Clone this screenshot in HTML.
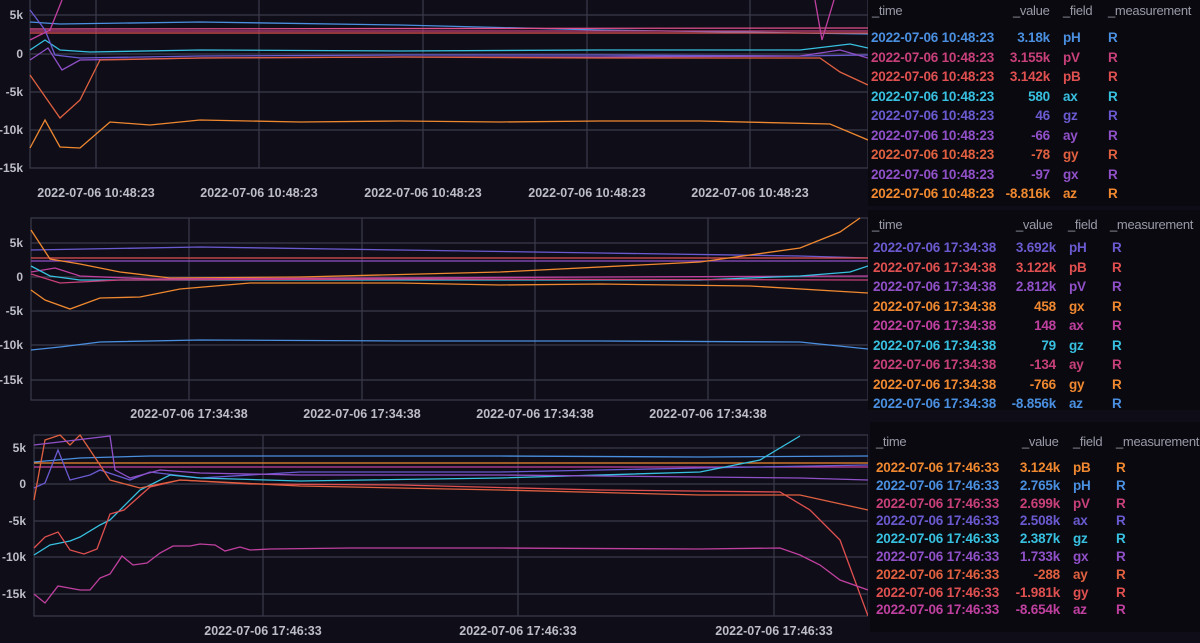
<!DOCTYPE html>
<html><head><meta charset="utf-8"><style>
html,body{margin:0;padding:0;background:#0f0e18;width:1200px;height:643px;overflow:hidden;font-family:"Liberation Sans",sans-serif}
svg{position:absolute;left:0;top:0}
.lg{position:absolute;background:#09090f;font-size:13px;font-weight:bold;letter-spacing:-0.3px}
.lg .r{position:absolute;left:0;white-space:nowrap;height:18px}
.lg span{position:absolute}
.h{color:#9a9aa8;font-weight:normal}
</style></head><body>
<svg width="868" height="643" viewBox="0 0 868 643" font-family="Liberation Sans" font-size="12" font-weight="bold" fill="#bdbdc8">
<g stroke="#3a3a4a" stroke-width="1.2" fill="none">
<rect x="30" y="-1" width="838" height="169"/>
<line x1="30" y1="15" x2="868" y2="15"/><line x1="30" y1="54" x2="868" y2="54"/><line x1="30" y1="92" x2="868" y2="92"/><line x1="30" y1="130" x2="868" y2="130"/>
<line x1="96" y1="0" x2="96" y2="168"/><line x1="259" y1="0" x2="259" y2="168"/><line x1="423" y1="0" x2="423" y2="168"/><line x1="587" y1="0" x2="587" y2="168"/><line x1="750" y1="0" x2="750" y2="168"/>
<rect x="31" y="218" width="837" height="182"/>
<line x1="31" y1="243" x2="868" y2="243"/><line x1="31" y1="277" x2="868" y2="277"/><line x1="31" y1="311" x2="868" y2="311"/><line x1="31" y1="345" x2="868" y2="345"/><line x1="31" y1="380" x2="868" y2="380"/>
<line x1="189" y1="218" x2="189" y2="400"/><line x1="362" y1="218" x2="362" y2="400"/><line x1="535" y1="218" x2="535" y2="400"/><line x1="708" y1="218" x2="708" y2="400"/>
<rect x="34" y="435" width="834" height="181"/>
<line x1="34" y1="448" x2="868" y2="448"/><line x1="34" y1="484" x2="868" y2="484"/><line x1="34" y1="521" x2="868" y2="521"/><line x1="34" y1="557" x2="868" y2="557"/><line x1="34" y1="594" x2="868" y2="594"/>
<line x1="263" y1="435" x2="263" y2="616"/><line x1="518" y1="435" x2="518" y2="616"/><line x1="774" y1="435" x2="774" y2="616"/>
</g>
<g text-anchor="end">
<text x="23" y="19">5k</text><text x="23" y="58">0</text><text x="23" y="96">-5k</text><text x="23" y="134">-10k</text><text x="23" y="172">-15k</text>
<text x="23" y="247">5k</text><text x="23" y="281">0</text><text x="23" y="315">-5k</text><text x="23" y="349">-10k</text><text x="23" y="384">-15k</text>
<text x="26" y="452">5k</text><text x="26" y="488">0</text><text x="26" y="525">-5k</text><text x="26" y="561">-10k</text><text x="26" y="598">-15k</text>
</g>
<g text-anchor="middle" font-size="12.5">
<text x="96" y="197">2022-07-06 10:48:23</text><text x="259" y="197">2022-07-06 10:48:23</text><text x="423" y="197">2022-07-06 10:48:23</text><text x="587" y="197">2022-07-06 10:48:23</text><text x="750" y="197">2022-07-06 10:48:23</text>
<text x="189" y="418">2022-07-06 17:34:38</text><text x="362" y="418">2022-07-06 17:34:38</text><text x="535" y="418">2022-07-06 17:34:38</text><text x="708" y="418">2022-07-06 17:34:38</text>
<text x="263" y="635">2022-07-06 17:46:33</text><text x="518" y="635">2022-07-06 17:46:33</text><text x="774" y="635">2022-07-06 17:46:33</text>
</g>
<g fill="none" stroke-width="1.3">
<polyline stroke="#4a8fe0" points="30,22 60,24 200,22 400,25 600,30 800,33 868,34"/>
<polyline stroke="#c8407a" points="30,31 868,31"/>
<polyline stroke="#e05050" points="30,33 868,33"/>
<polyline stroke="#e0508a" points="30,29 868,28"/>
<polyline stroke="#38c0e0" points="30,50 45,40 60,50 90,52 200,50 400,51 600,50 800,50 850,44 868,48"/>
<polyline stroke="#6a5ad0" points="30,10 45,30 55,55 80,58 200,56 400,55 600,55 800,56 868,55"/>
<polyline stroke="#9050c8" points="30,60 48,48 62,70 80,60 200,58 400,57 600,57 800,56 840,50 868,58"/>
<polyline stroke="#e06040" points="30,75 60,118 80,100 100,60 200,58 400,57 600,58 820,58 840,72 868,85"/>
<polyline stroke="#c040a0" points="30,40 50,30 62,0"/>
<polyline stroke="#c040a0" points="815,0 822,40 834,0"/>
<polyline stroke="#f08830" points="30,148 45,120 60,147 80,148 110,122 150,125 200,120 300,122 400,121 500,122 600,121 700,121 830,124 868,140"/>
<polyline stroke="#6a5ad0" points="31,250 200,247 400,250 600,253 800,256 868,258"/>
<polyline stroke="#e05050" points="31,258 868,258"/>
<polyline stroke="#9050c8" points="31,261 868,261"/>
<polyline stroke="#f08830" points="31,230 50,259 80,264 120,272 170,278 300,277 500,272 700,262 800,248 840,232 860,218"/>
<polyline stroke="#c040a0" points="31,272 55,268 80,276 150,279 400,278 600,277 868,276"/>
<polyline stroke="#38c0e0" points="31,266 50,276 80,280 200,280 500,280 700,280 800,276 850,272 868,266"/>
<polyline stroke="#c8407a" points="31,274 60,283 120,280 400,279 868,280"/>
<polyline stroke="#f08830" points="31,290 45,300 70,309 100,298 140,297 180,289 250,283 400,283 500,285 600,284 750,286 868,293"/>
<polyline stroke="#4a8fe0" points="31,350 60,347 100,342 200,340 400,341 600,341 800,342 868,349"/>
<polyline stroke="#4a8fe0" points="34,462 80,458 150,456 300,456 500,456 700,457 868,456"/>
<polyline stroke="#f08830" points="34,463 868,463"/>
<polyline stroke="#c040a0" points="34,467 868,467"/>
<polyline stroke="#6a5ad0" points="34,488 45,483 58,450 70,480 90,475 100,470 130,480 150,472 200,478 300,472 500,472 700,468 868,465"/>
<polyline stroke="#38c0e0" points="34,555 50,545 60,543 70,541 80,537 100,525 110,520 140,490 170,475 200,478 300,481 500,478 700,472 760,460 800,436"/>
<polyline stroke="#e05050" points="34,548 45,537 58,532 70,550 84,554 97,549 110,514 124,510 150,487 180,480 250,484 400,485 600,490 780,492 810,510 840,540 868,616"/>
<polyline stroke="#e06040" points="34,500 45,440 60,435 70,445 80,435 110,480 140,488 180,480 300,486 500,490 700,495 800,495 868,510"/>
<polyline stroke="#9050c8" points="34,445 110,436 115,470 130,478 160,470 200,473 300,475 500,475 600,476 800,478 868,480"/>
<polyline stroke="#c040a0" points="34,594 45,603 58,586 80,590 90,590 100,578 110,574 122,556 133,565 147,563 160,553 173,546 190,546 200,544 215,545 225,551 240,547 250,550 270,549 350,548 500,548 700,549 780,548 800,555 820,565 840,580 868,590"/>
</g>
</svg>

<div class="lg" style="left:868px;top:0;width:332px;height:206px">
<div class="r h" style="top:3px"><span style="left:4px">_time</span><span style="left:145px">_value</span><span style="left:195px">_field</span><span style="left:240px">_measurement</span></div>
</div>
<div class="lg" style="left:868px;top:210px;width:332px;height:200px">
<div class="r h" style="top:7px"><span style="left:4px">_time</span><span style="left:148px">_value</span><span style="left:200px">_field</span><span style="left:242px">_measurement</span></div>
</div>
<div class="lg" style="left:870px;top:422px;width:330px;height:210px">
<div class="r h" style="top:12px"><span style="left:6px">_time</span><span style="left:152px">_value</span><span style="left:203px">_field</span><span style="left:246px">_measurement</span></div>
</div>
<div id="rows"></div>
<script>
function T(x,y,vr,rows,f,m,step){let h='';rows.forEach((r,i)=>{let t=y+i*step;h+=`<div style="position:absolute;left:${x}px;top:${t}px;color:${r[0]};font-size:13.5px;font-weight:bold;letter-spacing:-0.2px;white-space:nowrap;width:${vr}px"><span>${r[1]}</span><span style="position:absolute;right:0">${r[2]}</span><span style="position:absolute;left:${f}px">${r[3]}</span><span style="position:absolute;left:${m}px">R</span></div>`});return h;}
const B='#4a8fe0',P='#c8407a',Rd='#e05050',C='#38c0e0',I='#6a5ad0',V='#9050c8',O='#f08830',Or='#e06040',M='#c040a0';
let d1='2022-07-06 10:48:23',d2='2022-07-06 17:34:38',d3='2022-07-06 17:46:33';
let h='';
h+=T(871,30,179,[[B,d1,'3.18k','pH'],[P,d1,'3.155k','pV'],[Rd,d1,'3.142k','pB'],[C,d1,'580','ax'],[I,d1,'46','gz'],[V,d1,'-66','ay'],[Or,d1,'-78','gy'],[V,d1,'-97','gx'],[O,d1,'-8.816k','az']],192,237,19.5);
h+=T(873,240,183,[[I,d2,'3.692k','pH'],[Rd,d2,'3.122k','pB'],[V,d2,'2.812k','pV'],[O,d2,'458','gx'],[M,d2,'148','ax'],[C,d2,'79','gz'],[P,d2,'-134','ay'],[O,d2,'-766','gy'],[B,d2,'-8.856k','az']],196,239,19.5);
h+=T(876,460,184,[[O,d3,'3.124k','pB'],[B,d3,'2.765k','pH'],[P,d3,'2.699k','pV'],[I,d3,'2.508k','ax'],[C,d3,'2.387k','gz'],[V,d3,'1.733k','gx'],[Or,d3,'-288','ay'],[Rd,d3,'-1.981k','gy'],[M,d3,'-8.654k','az']],197,240,17.8);
document.getElementById('rows').innerHTML=h;
</script>
</body></html>
